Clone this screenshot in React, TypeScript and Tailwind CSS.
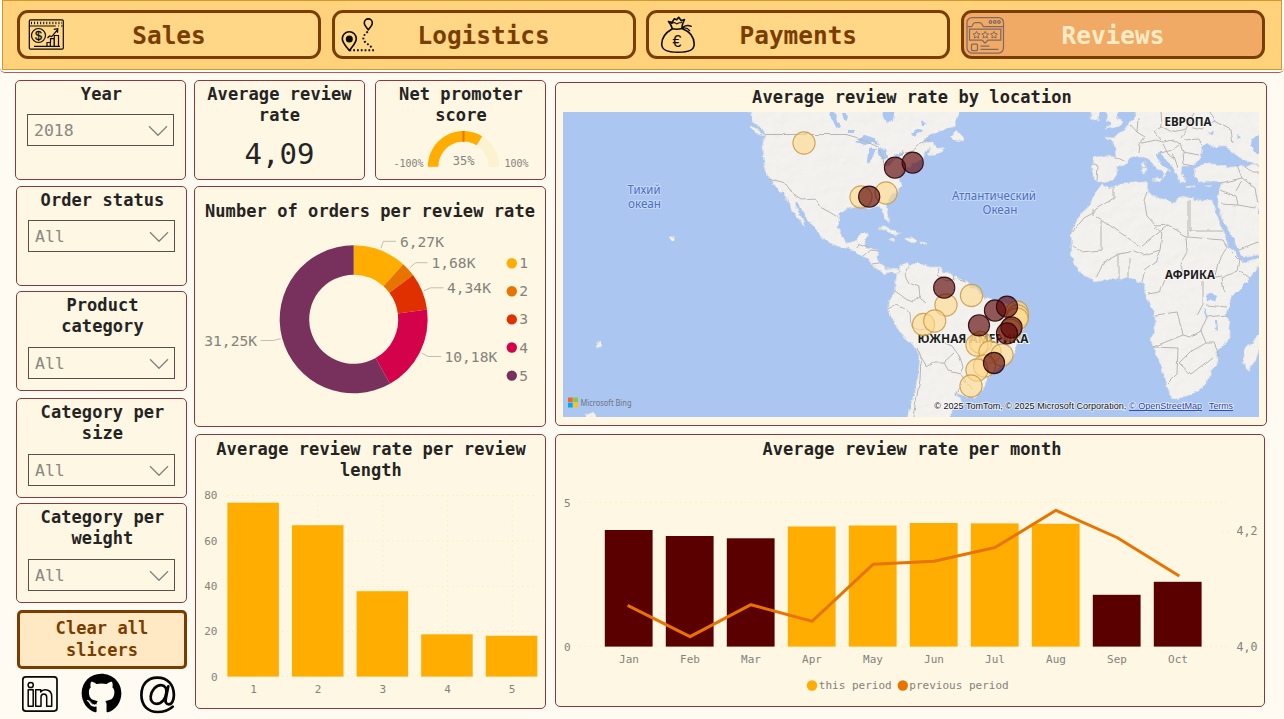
import React from 'react';
import { FaGithub } from 'react-icons/fa';

const MONO = "font-['DejaVu_Sans_Mono',monospace]";

function Panel({ className, children }: { className: string; children: React.ReactNode }) {
  return (
    <section className={`flex shrink-0 flex-col items-center overflow-hidden rounded-[5px] border border-[#8a3a3c] bg-[#fdf7e3] ${className}`}>
      {children}
    </section>
  );
}

function Title({ children, className = '' }: { children: React.ReactNode; className?: string }) {
  return (
    <h2 className={`text-center text-[17px] leading-[21px] font-bold tracking-[0.08px] whitespace-pre text-[#252423] ${className}`}>
      {children}
    </h2>
  );
}

function Slicer({ title, value, className, tall }: { title: string; value: string; className: string; tall?: boolean }) {
  return (
    <Panel className={`w-[171px] pt-[3px] ${className}`}>
      <Title className="pl-[2px]">{title}</Title>
      <div className={`flex h-[32px] w-[147px] shrink-0 items-center justify-between border border-[#55524b] pr-[5px] pl-[6px] ${tall ? 'mt-[10px]' : 'mt-[9px]'}`}>
        <span className="pt-[3px] text-[16.5px] text-[#8a8782]">{value}</span>
        <svg className="mt-[2px]" width="20" height="12" viewBox="0 0 20 12" fill="none" stroke="#85827c" strokeWidth="1.3">
          <path d="M1 1.2 10 10.3 19 1.2" />
        </svg>
      </div>
    </Panel>
  );
}

function SalesIcon() {
  return (
    <svg width="36" height="32" viewBox="28 19 36 32" fill="none" stroke="#0b0b0b" strokeWidth="1.2">
      <rect x="29.3" y="19.8" width="34" height="29.4" rx="1.2" />
      <path d="M29.3 26h26.5M58 26h1M61 26h1.500" />
      <path d="M31 23h31" strokeWidth="2.600" strokeDasharray="1 2.050" />
      <circle cx="38.500" cy="35.500" r="7" />
      <text x="38.500" y="40" textAnchor="middle" fontSize="12.500" fontFamily="Liberation Sans, sans-serif" fill="#0b0b0b" stroke="#0b0b0b" strokeWidth=".3">$</text>
      <path d="M34 46.300h26M47 46v-3.500h3.300V46M50.500 43v-4.300h3.600V46M54.300 46V35.500h4.200V46M47.500 38l2-2 2.200.6 5.500-6.500M53.800 29.300l4-.6-.3 4" />
    </svg>
  );
}

function LogisticsIcon() {
  return (
    <svg width="36" height="36" viewBox="340 17 36 36" fill="none" stroke="#0b0b0b" strokeWidth="1.600">
      <path d="M368.300 29.700c-2.200-2.700-4-4.500-4-6.800a4 4 0 0 1 8 0c0 2.300-1.800 4.100-4 6.800Z" />
      <path d="M349.300 50.500c-3.900-5-7-8-7-11.800a7 7 0 0 1 14 0c0 3.800-3.100 6.800-7 11.800Z" />
      <circle cx="349.300" cy="38.900" r="2.700" fill="#0b0b0b" />
      <path d="M367.800 31.500c-3 2.500-5 5-4.300 8 .7 3.300 6.300 5 8.500 8.600M374 50.300h-24" strokeWidth="1.900" strokeDasharray="1.800 2" />
    </svg>
  );
}

function PaymentsIcon() {
  return (
    <svg width="36" height="40" viewBox="660 15 36 40" fill="none" stroke="#0b0b0b" strokeWidth="1.600" strokeLinejoin="round" strokeLinecap="round">
      <path d="M672.300 28.500c-.8-3-2-4.700-3.800-7l3.500 1 2.200-3.700 2.500 1 2-2.500 2.600 3.500 3.200-1.300c-1.500 3-2.500 5-2.600 8" />
      <path d="M671.500 23.500c2.500-1.500 4-1 5.200.5 1.300-1.300 3-1 4.800-1.500" strokeWidth="1.100" />
      <path d="M672.300 28.800c3.500.8 6.500.6 9.800-.3M683 27c3-2 5.500-2 8.300-.7M683 28c2.500-.5 5 .5 6.600 2.600" strokeWidth="1.400" />
      <path d="M672 29c-6 3.500-10.300 8.400-10.300 15 0 6 5 8.200 16.300 8.200s16.200-2.200 16.200-8.200c0-7-4.700-12.500-11.700-15.300" />
      <text x="677" y="46.800" textAnchor="middle" fontSize="16" fontFamily="Liberation Sans, sans-serif" fill="#0b0b0b" stroke="none">€</text>
    </svg>
  );
}

function ReviewsIcon() {
  const star = 'M0-3.400 1.100-1.200 3.400-.9 1.700.8 2.100 3.200 0 2.100-2.100 3.200-1.700.8-3.400-.9-1.100-1.200Z';
  return (
    <svg width="40" height="38" viewBox="966 15 40 38" fill="none" stroke="#806961" strokeWidth="1.250">
      <rect x="967" y="16.500" width="36.500" height="35.500" rx="5" />
      <path d="M967.500 25.500h4c1.500 0 1-4 3.500-4h5c2.500 0 2 4 4 4h19" />
      <circle cx="990.500" cy="21" r="1.300" /><circle cx="994.800" cy="21" r="1.300" /><circle cx="999" cy="21" r="1.300" />
      <path d="M969.500 28.200h31.300v11h-13l-2.800 3-2.800-3h-12.700Z" />
      {[976.5, 985.2, 994].map((x) => <path key={x} d={star} strokeWidth="1" transform={`translate(${x} 33.800)`} />)}
      <rect x="971.500" y="43" width="6" height="6.500" rx="1" />
      <path d="M980.500 45h9M980.500 48.300h18" />
    </svg>
  );
}

function NavButton({ label, icon, active, pad }: { label: string; icon: React.ReactNode; active?: boolean; pad: string }) {
  return (
    <button
      className={`grid h-[49px] w-[304px] shrink-0 grid-cols-[50px_1fr_50px] items-center rounded-[11px] border-[3px] border-[#7a3d00] ${
        active ? 'bg-[#f0aa66] text-[#ffebc4]' : 'bg-[#ffd787] text-[#7a3d00]'
      }`}
    >
      <span className={pad}>{icon}</span>
      <span className="pt-[3px] text-center text-[24.400px] leading-none font-bold">{label}</span>
    </button>
  );
}

function Gauge() {
  return (
    <svg width="169" height="48" viewBox="376 130 169 48" fontFamily="DejaVu Sans Mono, monospace" fill="#85827c">
      <g fill="none" strokeWidth="10.600">
        <path d="M433.100 166.700a30.400 30.400 0 0 1 60.800 0" stroke="#fdf2d0" />
        <path d="M433.100 166.700A30.400 30.400 0 0 1 479.400 140.780" stroke="#ffad00" />
      </g>
      <path d="M463.500 131v10.800" stroke="#e87400" strokeWidth="2" />
      <text x="463.700" y="165" textAnchor="middle" fontSize="12">35%</text>
      <text x="423.500" y="167.200" textAnchor="end" fontSize="10">-100%</text>
      <text x="504.500" y="167.200" fontSize="10">100%</text>
    </svg>
  );
}

const SLICES = [
  { v: 6.27, color: '#ffad00' },
  { v: 1.68, color: '#e87400' },
  { v: 4.34, color: '#e03000' },
  { v: 10.18, color: '#d4024a' },
  { v: 31.25, color: '#78305c' },
];

function Donut() {
  const cx = 353.7, cy = 319.3, R = 74, r = 44.5;
  const total = SLICES.reduce((s, d) => s + d.v, 0);
  let acc = 0;
  const at = (f: number, q: number) => `${cx + q * Math.sin(f * 2 * Math.PI)} ${cy - q * Math.cos(f * 2 * Math.PI)}`;
  return (
    <svg width="350" height="200" viewBox="195 224 350 200" fontFamily="DejaVu Sans Mono, monospace" fontSize="14.600" fill="#85827c">
      {SLICES.map((d) => {
        const a = acc / total;
        acc += d.v;
        const b = acc / total;
        const big = b - a > 0.5 ? 1 : 0;
        return <path key={d.color} fill={d.color} d={`M${at(a, R)}A${R} ${R} 0 ${big} 1 ${at(b, R)}L${at(b, r)}A${r} ${r} 0 ${big} 0 ${at(a, r)}Z`} />;
      })}
      <g fill="none" stroke="#c2beb0">
        <path d="M381 248.300 383.300 241.300H396M410 267.700 415.500 262.700H427.500M424 290.700 430.700 287.800H443.500M421.700 353 428 356.500H441M280.700 338.700 273.300 340.500H260.700" />
      </g>
      <text x="400" y="247.300">6,27K</text>
      <text x="431.500" y="268">1,68K</text>
      <text x="447" y="293.200">4,34K</text>
      <text x="444.500" y="362.300">10,18K</text>
      <text x="257" y="346.300" textAnchor="end">31,25K</text>
      {SLICES.map((d, i) => (
        <g key={d.color}>
          <circle cx="511.800" cy={263.2 + i * 28.1} r="5.200" fill={d.color} />
          <text x="519.300" y={268.2 + i * 28.1}>{i + 1}</text>
        </g>
      ))}
    </svg>
  );
}

function LengthChart() {
  const tops = [502.7, 525.2, 591.2, 634.3, 635.8];
  return (
    <svg width="349" height="222" viewBox="196 482 349 222" fontFamily="DejaVu Sans Mono, monospace" fontSize="11" fill="#85827c">
      <g stroke="#fbeebd" strokeDasharray="1.500 3.500">
        {[495.5, 541, 586.5, 631.5, 676.5].map((y) => <path key={y} d={`M227 ${y}H537`} />)}
        {tops.map((t, i) => <path key={t} d={`M${253.5 + i * 64.7} 495V677`} />)}
      </g>
      {['80', '60', '40', '20', '0'].map((t, i) => <text key={t} x="217.500" y={499.2 + i * 45.4} textAnchor="end">{t}</text>)}
      {tops.map((t, i) => (
        <g key={t}>
          <rect x={227.4 + i * 64.6} y={t} width="51.500" height={676.6 - t} fill="#ffad00" />
          <text x={253.5 + i * 64.65} y="693" textAnchor="middle">{i + 1}</text>
        </g>
      ))}
    </svg>
  );
}

const MONTHS = [
  { m: 'Jan', t: 530, dark: true, p: 606 },
  { m: 'Feb', t: 536, dark: true, p: 636.7 },
  { m: 'Mar', t: 538.3, dark: true, p: 604.7 },
  { m: 'Apr', t: 526.5, dark: false, p: 621.3 },
  { m: 'May', t: 525.5, dark: false, p: 564.3 },
  { m: 'Jun', t: 523, dark: false, p: 561.2 },
  { m: 'Jul', t: 523.4, dark: false, p: 547.5 },
  { m: 'Aug', t: 523.8, dark: false, p: 510.3 },
  { m: 'Sep', t: 594.8, dark: true, p: 537.5 },
  { m: 'Oct', t: 581.8, dark: true, p: 575.3 },
];

function MonthChart() {
  return (
    <svg width="708" height="236" viewBox="556 466 708 236" fontFamily="DejaVu Sans Mono, monospace" fontSize="11" fill="#85827c">
      <g stroke="#fbeebd" strokeDasharray="1.500 3.500">
        <path d="M580 502.500H1226M580 646.500H1229M1222 531.500H1229" />
      </g>
      <text x="570.500" y="507" textAnchor="end">5</text>
      <text x="570.500" y="651" textAnchor="end">0</text>
      <text x="1236.500" y="535" fontSize="11.600">4,2</text>
      <text x="1236.500" y="651" fontSize="11.600">4,0</text>
      {MONTHS.map((d, i) => (
        <g key={d.m}>
          <rect x={604.8 + i * 61} y={d.t} width="47.800" height={646.6 - d.t} fill={d.dark ? '#5b0001' : '#ffad00'} />
          <text x={629 + i * 61} y="663" textAnchor="middle">{d.m}</text>
        </g>
      ))}
      <polyline points={MONTHS.map((d, i) => `${629 + i * 61},${d.p}`).join(' ')} fill="none" stroke="#e87400" strokeWidth="3" strokeLinejoin="round" strokeLinecap="square" />
      <circle cx="812" cy="685.500" r="5.200" fill="#ffad00" />
      <text x="818.800" y="689.300">this period</text>
      <circle cx="902.800" cy="685.500" r="5.200" fill="#e87400" />
      <text x="909.300" y="689.300">previous period</text>
    </svg>
  );
}

const LAND = [
  // North and Central America
  'M748 108 754 122 763 130 765 135 762 147 764 163 768 177 777 188 786 197 790 207 797 217 803 226 804 222 799 213 794 202 796 201 801 209 810 222 818 233 828 242 840 247 848 248 862 256 868 259 872 266 880 271 885 274 891 271 896 275 900 271 893 268 886 269 879 263 878 250 865 248 865 242 868 233 860 234 857 240 848 243 842 237 838 227 840 214 848 208 860 205 868 208 878 205 882 210 884 218 888 223 889 216 886 205 892 195 901 187 899 178 905 169 914 163 923 160 925 152 931 147 928 156 936 154 945 148 938 148 932 142 922 143 930 135 941 131 955 126 959 112 955 106Z',
  // South America
  'M897 274 901 265 906 263 909 267 917 263 930 267 940 267 944 272 953 274 962 280 967 281 970 287 977 288 982 297 992 300 1001 302 1012 304 1022 308 1028 315 1026 324 1020 333 1017 344 1015 354 1006 364 996 369 988 377 984 388 974 398 963 395 955 393 962 401 961 407 953 408 950 420 907 420 913 397 918 377 920 357 914 345 900 333 893 320 888 311 888 303 894 294 895 285Z',
  // Africa
  'M1101 185 1094 196 1090 204 1079 216 1071 233 1072 247 1070 255 1074 264 1083 275 1095 282 1109 279 1120 280 1129 277 1136 281 1144 283 1145 293 1150 304 1155 315 1155 327 1151 341 1157 357 1164 374 1168 390 1172 399 1187 397 1203 387 1211 375 1213 369 1218 364 1216 352 1230 338 1230 326 1227 314 1231 298 1244 285 1252 276 1262 260 1262 257 1243 263 1239 258 1229 247 1223 230 1216 213 1212 200 1196 200 1184 196 1178 198 1175 203 1163 199 1154 196 1147 191 1148 182 1141 182 1122 184 1109 188Z',
  // Madagascar
  'M1262 331 1251 344 1245 349 1243 364 1248 371 1255 362 1262 342Z',
  // Europe
  'M1135 108 1136 116 1129 123 1125 130 1118 134 1113 138 1105 137 1114 144 1116 157 1105 156 1094 157 1092 170 1094 179 1100 183 1113 180 1117 174 1117 168 1126 163 1130 158 1142 157 1150 160 1156 168 1164 174 1164 178 1167 172 1171 171 1160 163 1156 155 1160 152 1167 161 1173 168 1176 174 1180 183 1186 181 1181 174 1182 166 1191 166 1195 164 1200 158 1203 146 1208 143 1215 149 1219 145 1226 145 1231 152 1245 160 1262 167 1262 108Z',
  // Turkey, Levant and Arabia
  'M1194 169 1203 164 1216 164 1230 167 1244 166 1253 164 1262 169 1262 254 1244 258 1236 244 1226 226 1218 209 1218 198 1221 183 1208 181 1199 182 1195 177Z',
  // Islands
  'M1103 109 1109 116 1106 120 1111 124 1105 129 1121 126 1123 121 1117 118 1119 108Z',
  'M1091 109 1091 119 1098 121 1100 110Z',
  'M950 137 957 130 960 135 965 137 963 141 954 140Z',
  'M878 229 885 226 893 230 900 234 896 235 888 231Z',
  'M904 239 911 237 918 241 915 243 906 241Z',
  'M889 239h4l2 2h-4Z M921 242h5v2h-5Z M1153 180 1162 177 1160 182Z M1142 168h4v6h-3Z M1142 162h3v5h-3Z M1186 186h8v1.500h-8Z M1206 186l6-2-2 3Z',
  'M586 415l8-3 3 4-10 4Z M596 344l5-2 1 3-5 2Z M671 235l4 3-2 3-3-3Z',
  'M751 125l8 6 5 5-6-2-7-6Z',
];

const LAKES = [
  'M855 142 865 135 875 139 880 144 872 143 865 145Z',
  'M870 148 876 149 873 155 871 163 867 162 868 153Z',
  'M878 148 886 149 888 157 882 160 879 154Z',
  'M881 166 889 161 894 160 889 165Z',
  'M894 156 902 152 903 155 896 158Z',
  'M829 110 834 112 840 126 836 128 832 120Z M842 113h4l2 8-4-1Z',
  'M883 108 895 108 893 120 887 124 884 117Z',
  'M847 130h8v4h-7Z M911 133l7-4 5 1-9 6Z M922 120l4 3-3 3Z',
  'M1252 139 1262 132 1262 156 1256 152 1251 145Z M1237 135l4 2-3 2Z M1207 133l7-2-1 3Z',
  'M1206 296l6-3 5 3-2 5-8-1Z M1203 306l1.500 8 2 5 1 0-2-8Z M1215 320l2 0 1 11-2-1Z',
  'M1257 208 1262 206 1262 216Z',
];

const BORDERS =
  'M765 134.500H846L855 137 865 141 878 147 883 158 884 165 895 159 905 152 915 149 920 143 930 139M769 178 785 183 793 194 803 200 815 199 820 207 831 213 839 218M855 250 860 244 868 247M863 256 870 250 878 251M872 264 878 263' +
  'M909 267 905 275 909 283 919 287 920 298 926 303M895 292 905 299 913 302 921 296M940 267 938 275 946 281 956 279 966 282M953 274 954 282M888 309 897 304 905 308 910 314 911 327 920 330 928 328 938 340 952 346 960 357 963 367 960 374 948 371 944 362 935 362 927 367 921 357 917 347M944 362 954 353M960 374 966 381 958 389 955 397M921 357 920 380 916 400 913 417M963 381 973 388' +
  'M1114 187 1114 198 1096 209 1093 213 1084 218 1071 234M1093 209V216M1096 216 1141 247 1168 225M1101 221V250L1082 252 1073 246M1147 192 1144 200 1147 216 1156 226 1168 225 1188 237V201M1190 200V231H1223M1186 237 1187 252 1180 264 1185 274 1203 279 1222 276M1155 227 1162 233 1160 250 1144 255 1134 251 1119 254 1104 262 1096 278M1119 254V279M1129 257V277M1160 250 1155 262 1145 269 1142 282M1188 237 1223 240 1227 247 1218 262 1215 275M1232 252 1240 260 1238 271 1222 278 1224 292M1156 315 1177 312 1183 335 1153 347 1178 348 1177 374 1167 384M1183 335 1190 337 1201 331 1206 343 1190 352 1179 363 1191 374 1212 358M1201 331 1207 317 1227 315M1203 281V304L1198 314M1240 271 1250 278M1206 305 1227 307M1148 294 1160 292 1166 277 1180 273M1206 343 1214 343 1219 355' +
  'M1093 164 1098 166 1097 181M1116 157 1126 162M1130 124 1137 132 1145 137 1140 144 1139 153M1138 119 1137 132M1142 143 1156 140 1163 142 1174 140 1180 144 1173 150 1160 153M1160 112 1161 126 1154 131 1161 140M1161 126 1172 132 1186 129 1194 113M1186 129 1181 138M1184 140 1199 139 1202 145M1180 144 1183 152 1199 155M1173 153 1178 168M1183 152 1184 164 1192 166M1163 144 1168 154 1174 158M1186 125 1202 129 1214 121 1231 130 1233 143M1210 112 1215 121M1237 165 1242 178 1221 183M1244 166 1252 172 1259 172M1242 178 1255 188 1258 204M1220 190 1236 197 1238 205 1221 204M1236 192 1242 181M1240 249 1258 242M1238 205 1255 208';

function Bubble({ x, y, dark }: { x: number; y: number; dark?: boolean }) {
  return dark ? (
    <circle cx={x} cy={y} r="10.600" fill="#5b0001" fillOpacity=".64" stroke="#250509" strokeOpacity=".9" strokeWidth="1.100" />
  ) : (
    <circle cx={x} cy={y} r="11.100" fill="#ffd98f" fillOpacity=".64" stroke="#c99a45" strokeWidth="1.100" strokeOpacity=".85" />
  );
}

const LIGHT: [number, number][] = [
  [804, 143], [861, 197], [886, 193], [971.5, 295.5], [946, 305], [923.5, 324.5], [934.7, 321],
  [1017, 312], [1017.5, 316], [1017, 319], [1010, 330], [980.5, 342.5], [977, 345], [990, 352], [1002, 355], [984.5, 366], [977, 370], [971, 386],
];
const DARK: [number, number][] = [
  [895, 167.7], [912.7, 162.7], [869.2, 196.7], [944.2, 287.7], [979, 325.3], [995, 310.5], [1007, 306.7],
  [1011.5, 327.5], [1007, 333.3], [994, 363],
];

function WorldMap() {
  return (
    <svg width="696" height="305" viewBox="563 112 696 305" fontFamily="Noto Sans, sans-serif">
      <defs>
        <filter id="coast" x="0" y="0" width="100%" height="100%">
          <feTurbulence type="fractalNoise" baseFrequency=".16" numOctaves="3" seed="4" result="n" />
          <feDisplacementMap in="SourceGraphic" in2="n" scale="5" xChannelSelector="R" yChannelSelector="G" />
        </filter>
        <filter id="line" x="0" y="0" width="100%" height="100%">
          <feTurbulence type="fractalNoise" baseFrequency=".09" numOctaves="2" seed="7" result="n" />
          <feDisplacementMap in="SourceGraphic" in2="n" scale="3.500" xChannelSelector="R" yChannelSelector="G" />
        </filter>
        <filter id="relief" filterUnits="userSpaceOnUse" x="563" y="112" width="696" height="305">
          <feTurbulence type="fractalNoise" baseFrequency=".07 .1" numOctaves="4" seed="9" />
          <feDiffuseLighting surfaceScale="1.300" lightingColor="#ffffff">
            <feDistantLight azimuth="225" elevation="62" />
          </feDiffuseLighting>
        </filter>
        <clipPath id="land"><path d={LAND.join(' ')} /></clipPath>
      </defs>
      <rect x="563" y="112" width="696" height="305" fill="#abc6f1" />
      <g filter="url(#coast)">
        <path d={LAND.join(' ')} fill="#f2f1ec" stroke="#d5dae0" strokeWidth=".8" />
        <g clipPath="url(#land)" opacity=".17">
          <rect x="563" y="112" width="696" height="305" filter="url(#relief)" />
        </g>
        <path d={LAKES.join(' ')} fill="#abc6f1" />
      </g>
      <path d={BORDERS} fill="none" stroke="#b8b5b2" strokeWidth="1" filter="url(#line)" />
      <g fontSize="11.700" fill="#4a6fc4" stroke="#c5d8f7" strokeWidth="2" paintOrder="stroke" textAnchor="middle">
        <text x="644" y="193.800" textLength="33" lengthAdjust="spacingAndGlyphs">Тихий</text>
        <text x="644.500" y="207.500" textLength="33" lengthAdjust="spacingAndGlyphs">океан</text>
        <text x="994" y="200.300" textLength="84" lengthAdjust="spacingAndGlyphs">Атлантический</text>
        <text x="1000" y="214" textLength="35" lengthAdjust="spacingAndGlyphs">Океан</text>
      </g>
      <g fontSize="12" fontWeight="700" fill="#1e1e1e" stroke="#f7f7f5" strokeWidth="2" paintOrder="stroke">
        <text x="1164.500" y="126" textLength="47" lengthAdjust="spacingAndGlyphs">ЕВРОПА</text>
        <text x="1165" y="279" textLength="50" lengthAdjust="spacingAndGlyphs">АФРИКА</text>
        <text x="917.500" y="343" textLength="111" lengthAdjust="spacingAndGlyphs">ЮЖНАЯ АМЕРИКА</text>
      </g>
      {LIGHT.map(([x, y]) => <Bubble key={`${x}-${y}`} x={x} y={y} />)}
      {DARK.map(([x, y]) => <Bubble key={`${x}-${y}`} x={x} y={y} dark />)}
      <rect x="568" y="397.500" width="4.700" height="4.700" fill="#f3652b" />
      <rect x="573.300" y="397.500" width="4.700" height="4.700" fill="#8dc63f" />
      <rect x="568" y="402.800" width="4.700" height="4.700" fill="#00a8f0" />
      <rect x="573.300" y="402.800" width="4.700" height="4.700" fill="#ffc20e" />
      <text x="580.500" y="406" fontSize="8.500" fill="#6f7580" textLength="51" lengthAdjust="spacingAndGlyphs">Microsoft Bing</text>
      <g fontFamily="Liberation Sans, sans-serif" fontSize="9" stroke="#ffffff" strokeOpacity=".75" strokeWidth="1.600" paintOrder="stroke">
        <text x="934.300" y="409" textLength="192" lengthAdjust="spacingAndGlyphs" fill="#111">© 2025 TomTom, © 2025 Microsoft Corporation,</text>
        <g fill="#2440b0">
          <text x="1129" y="409" textLength="73" lengthAdjust="spacingAndGlyphs">© OpenStreetMap</text>
          <text x="1209" y="409" textLength="24" lengthAdjust="spacingAndGlyphs">Terms</text>
        </g>
      </g>
      <path d="M1129 410.500h73M1209 410.500h24" stroke="#2440b0" strokeWidth=".9" />
    </svg>
  );
}

function LinkedInIcon() {
  return (
    <svg width="36" height="36" viewBox="22 676 36 36" fill="none" stroke="#050505" strokeLinejoin="round">
      <rect x="22.800" y="676.900" width="34.200" height="34.200" rx="3" strokeWidth="1.700" />
      <g strokeWidth="1.500">
        <circle cx="30.700" cy="685" r="2.600" />
        <path d="M28.200 689.800h5v16.500h-5ZM35.700 689.800h5v2.200c2-3.300 11-3.700 11 4.500v9.800h-5v-9c0-4.500-5.700-4.500-5.700 0v9h-5.300Z" />
      </g>
    </svg>
  );
}

function MailIcon() {
  return (
    <svg width="38" height="40" viewBox="138 674 38 40" fill="none" stroke="#050505" strokeWidth="2.700" strokeLinecap="round">
      <path d="M166.300 693c-.8 6-4.500 10.800-9.600 10.800-4 0-6.400-3-6-7.300.6-6 5-11.300 10.300-11.300 4 0 6 3.200 5.300 7.800ZM168.300 686.300l-2.600 13c-.5 3 .5 5 3 5 3.300 0 5.200-4.300 5.200-9.300 0-10.500-6.500-17.300-16.500-17.300S141.400 684.500 141.400 695c0 10.300 6.300 17 16.300 17 5.500 0 10.500-1.500 15-5.300" />
    </svg>
  );
}

export default function App() {
  return (
    <main className={`flex h-[719px] w-[1284px] flex-col overflow-hidden bg-[#fffbf2] ${MONO}`}>
      <header className="h-[73px] shrink-0 rounded-b-[5px] border-b border-[#a85f62] bg-[#fffdf8] px-[2px]">
        <nav className="flex h-[70px] gap-[10.670px] border border-[#d29a2e] bg-[#ffd27b] pt-[9px] pl-[14px]">
          <NavButton label="Sales" icon={<SalesIcon />} pad="pl-[8px]" />
          <NavButton label="Logistics" icon={<LogisticsIcon />} pad="pl-[5px]" />
          <NavButton label="Payments" icon={<PaymentsIcon />} pad="pl-[11px]" />
          <NavButton label="Reviews" icon={<ReviewsIcon />} pad="pl-[2px]" active />
        </nav>
      </header>

      <div className="flex flex-1 pt-[7px] pl-[15px]">
        <aside className="flex w-[173px] shrink-0 flex-col">
          <Slicer title="Year" value="2018" className="mr-auto h-[100px]" />
          <Slicer title="Order status" value="All" className="mt-[6px] ml-px h-[100px]" />
          <Slicer title={'Product\ncategory'} value="All" className="mt-[5px] ml-px h-[100px]" tall />
          <Slicer title={'Category per\nsize'} value="All" className="mt-[7px] ml-px h-[100px]" tall />
          <Slicer title={'Category per\nweight'} value="All" className="mt-[5px] ml-px h-[100px]" tall />
          <button className="mt-[7px] ml-[2px] h-[59px] w-[170px] shrink-0 rounded-[5px] border-[3px] border-[#7a3d00] bg-[#ffe9c4] pb-[2px] text-[17px] leading-[22px] font-bold tracking-[0.080px] text-[#7a3d00]">
            Clear all
            <br />
            slicers
          </button>
          <div className="mt-[4px] flex items-center pl-[7px]">
            <LinkedInIcon />
            <FaGithub className="ml-[23px] size-[41px] text-black" />
            <span className="ml-[16px]"><MailIcon /></span>
          </div>
        </aside>

        <div className="ml-[6px] flex w-[352px] shrink-0 flex-col">
          <div className="flex justify-between">
            <Panel className="h-[100px] w-[171px] pt-[3px]">
              <Title>{'Average review\nrate'}</Title>
              <span className="mt-[11px] text-[29px] leading-[34px] text-[#252423]">4,09</span>
            </Panel>
            <Panel className="h-[100px] w-[171px] pt-[3px]">
              <Title className="pl-px">{'Net promoter\nscore'}</Title>
              <div className="mt-[4px]"><Gauge /></div>
            </Panel>
          </div>
          <Panel className="mt-[6px] h-[241px] pt-[14px]">
            <Title>Number of orders per review rate</Title>
            <div className="mt-[2px]"><Donut /></div>
          </Panel>
          <Panel className="mt-[7px] ml-px h-[275px] pt-[4px]">
            <Title className="pl-px">{'Average review rate per review\nlength'}</Title>
            <div className="mt-px"><LengthChart /></div>
          </Panel>
        </div>

        <div className="ml-[9px] flex flex-col pt-[2px]">
          <Panel className="h-[344px] w-[712px] pt-[4px]">
            <Title className="pl-[2px]">Average review rate by location</Title>
            <div className="mt-[4px]"><WorldMap /></div>
          </Panel>
          <Panel className="mt-[8px] h-[273px] w-[710px] pt-[4px]">
            <Title className="pl-[4px]">Average review rate per month</Title>
            <div className="mt-[6px]"><MonthChart /></div>
          </Panel>
        </div>
      </div>
    </main>
  );
}
